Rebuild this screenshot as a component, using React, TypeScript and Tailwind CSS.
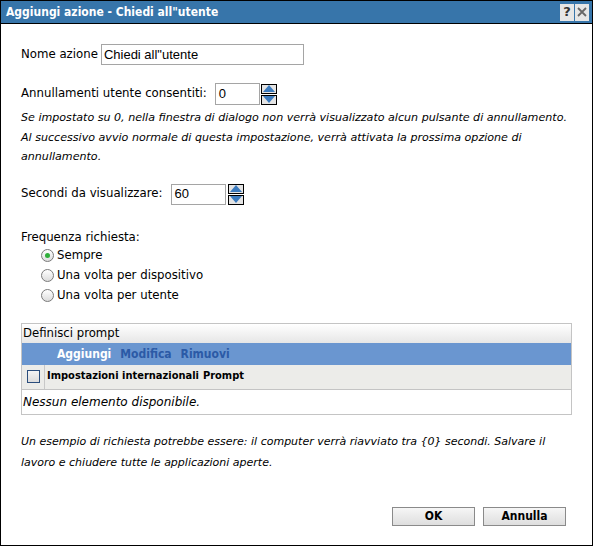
import React from "react";

const lbl = "font-['DejaVu_Sans',sans-serif] text-[11.75px] text-black";

function Spinner({ ml }: { ml: string }) {
  return (
    <div className={`flex flex-col gap-[1px] ${ml}`}>
      <div className="w-[16px] h-[10px] border border-black bg-[#e4e4e4] flex items-center justify-center">
        <svg width="12" height="7" viewBox="0 0 12 7"><polygon points="6,0 12,7 0,7" fill="#3b7bbf" /></svg>
      </div>
      <div className="w-[16px] h-[10px] border border-black bg-[#e4e4e4] flex items-center justify-center">
        <svg width="12" height="7" viewBox="0 0 12 7"><polygon points="0,0 12,0 6,7" fill="#3b7bbf" /></svg>
      </div>
    </div>
  );
}

function Radio({ checked, label }: { checked?: boolean; label: string }) {
  return (
    <div className="h-[20px] flex items-center pl-[20px]">
      <div className="w-[13px] h-[13px] rounded-full border border-[#7a7a7a] bg-gradient-to-b from-[#ffffff] to-[#dcdcdc] flex items-center justify-center">
        {checked && <div className="w-[5px] h-[5px] rounded-full bg-[#2fae3a]" />}
      </div>
      <span className={`${lbl} ml-[3px]`}>{label}</span>
    </div>
  );
}

export default function App() {
  return (
    <div className="w-[593px] h-[546px] border border-black bg-white flex flex-col overflow-hidden">
      <div className="h-[23px] bg-[#3775aa] border-b border-black flex items-center justify-between pl-[5px] pr-[3px] shrink-0">
        <span className="font-['DejaVu_Sans_Condensed',sans-serif] font-bold text-[12px] text-white">Aggiungi azione - Chiedi all"utente</span>
        <div className="flex gap-[1px]">
          <div className="w-[14px] h-[17px] bg-[#e6e6e6] flex items-center justify-center font-['DejaVu_Sans',sans-serif] font-bold text-[13px] text-[#333]">?</div>
          <div className="w-[14px] h-[17px] bg-[#e6e6e6] flex items-center justify-center">
            <svg width="10" height="10" viewBox="0 0 10 10"><path d="M1 1L9 9M9 1L1 9" stroke="#666" strokeWidth="1.8" /></svg>
          </div>
        </div>
      </div>

      <div className="px-[20px] flex flex-col">
        <div className="flex items-center mt-[20px]">
          <span className={lbl}>Nome azione</span>
          <div className="ml-[3px] w-[203px] h-[21px] border border-[#a5a5a5] flex items-center pl-[2px] font-['Liberation_Sans',sans-serif] text-[13px] text-black">Chiedi all"utente</div>
        </div>

        <div className="flex items-center mt-[18px]">
          <span className={lbl}>Annullamenti utente consentiti:</span>
          <div className="ml-[8px] w-[45px] h-[22px] border border-[#a5a5a5] flex items-center pl-[3px] font-['Liberation_Sans',sans-serif] text-[13px] text-black">0</div>
          <Spinner ml="ml-[1px]" />
        </div>

        <p className="mt-[3px] font-['DejaVu_Sans',sans-serif] italic text-[11.1px] leading-[19.5px] text-black">
          Se impostato su 0, nella finestra di dialogo non verrà visualizzato alcun pulsante di annullamento.<br />
          Al successivo avvio normale di questa impostazione, verrà attivata la prossima opzione di<br />
          annullamento.
        </p>

        <div className="flex items-center mt-[17px]">
          <span className={lbl}>Secondi da visualizzare:</span>
          <div className="ml-[9px] w-[55px] h-[21px] border border-[#a5a5a5] flex items-center pl-[2px] font-['Liberation_Sans',sans-serif] text-[13px] text-black">60</div>
          <Spinner ml="ml-[2px]" />
        </div>

        <div className={`${lbl} mt-[23px] h-[18px] leading-[18px]`}>Frequenza richiesta:</div>
        <Radio checked label="Sempre" />
        <Radio label="Una volta per dispositivo" />
        <Radio label="Una volta per utente" />

        <div className="mt-[17px] w-[551px] border border-[#c4c4c4]">
          <div className="h-[19px] bg-gradient-to-b from-[#ffffff] to-[#e6e6e6] flex items-center pl-[1px] font-['DejaVu_Sans_Condensed',sans-serif] text-[13px] text-black">Definisci prompt</div>
          <div className="h-[22px] bg-[#6a96d0] flex items-center pl-[35px] gap-[9px] font-['DejaVu_Sans_Condensed',sans-serif] font-bold text-[12px]">
            <span className="text-white">Aggiungi</span>
            <span className="text-[#2b5aa6]">Modifica</span>
            <span className="text-[#2b5aa6]">Rimuovi</span>
          </div>
          <div className="h-[25px] bg-[#ecece9] flex items-stretch border-b border-[#c4c4c4]">
            <div className="w-[23px] border-r border-[#c8c8c8] flex items-center justify-center">
              <div className="w-[13px] h-[13px] border border-[#2a4d7c] bg-gradient-to-b from-[#f4f4f4] to-[#dcdcdc]" />
            </div>
            <div className="flex items-center pl-[2px] font-['DejaVu_Sans_Condensed',sans-serif] font-bold text-[11px] text-black gap-[4px]">
              <span>Impostazioni internazionali</span>
              <span>Prompt</span>
            </div>
          </div>
          <div className="h-[24px] flex items-center pl-[1px] font-['DejaVu_Sans',sans-serif] italic text-[12px] text-black">Nessun elemento disponibile.</div>
        </div>

        <p className="mt-[16px] font-['DejaVu_Sans',sans-serif] italic text-[11px] leading-[21px] text-black">
          Un esempio di richiesta potrebbe essere: il computer verrà riavviato tra {"{0}"} secondi. Salvare il<br />
          lavoro e chiudere tutte le applicazioni aperte.
        </p>

        <div className="flex justify-end gap-[8px] mt-[34px] pr-[6px]">
          <div className="w-[83px] h-[19px] border border-[#8a8a8a] bg-gradient-to-b from-[#f6f6f6] to-[#dedede] flex items-center justify-center font-['DejaVu_Sans_Condensed',sans-serif] font-bold text-[12px] text-black">OK</div>
          <div className="w-[83px] h-[19px] border border-[#8a8a8a] bg-gradient-to-b from-[#f6f6f6] to-[#dedede] flex items-center justify-center font-['DejaVu_Sans_Condensed',sans-serif] font-bold text-[12px] text-black">Annulla</div>
        </div>
      </div>
    </div>
  );
}
